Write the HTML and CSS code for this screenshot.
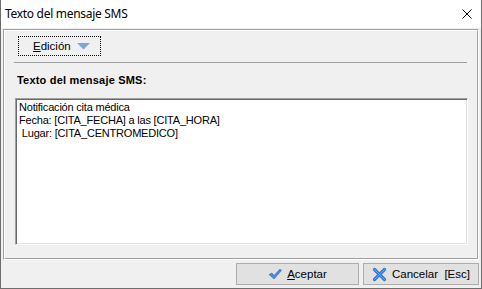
FILE: index.html
```html
<!DOCTYPE html>
<html lang="es">
<head>
<meta charset="utf-8">
<title>Texto del mensaje SMS</title>
<link rel="stylesheet" href="styles.css">
</head>
<body>
<div class="window">
  <div class="titlebar">
    <span class="title">Texto del mensaje SMS</span>
    <svg class="close" width="10" height="10" viewBox="0 0 10 10"><path d="M0.5 0.5 L9.5 9.5 M9.5 0.5 L0.5 9.5" stroke="#000" stroke-width="1" fill="none"/></svg>
  </div>
  <div class="body">
    <div class="panel">
      <div class="panel-inner">
        <div class="menu-btn"><span><u>E</u>dición</span><svg class="tri" width="13" height="7" viewBox="0 0 13 7"><path d="M0 0 H13 L6.5 6.5 Z" fill="#7ea4dc"/></svg></div>
        <div class="sep"></div>
        <div class="label">Texto del mensaje SMS:</div>
        <div class="memo">Notificación cita médica
Fecha: [CITA_FECHA] a las [CITA_HORA]
 Lugar: [CITA_CENTROMEDICO]</div>
      </div>
    </div>
    <div class="buttons">
      <div class="btn btn-ok">
        <svg width="14" height="12" viewBox="0 0 14 12"><path d="M1 6.5 L4 5 L6 7.5 L12 1 L13.5 2.5 L6 11 Z" fill="#4a8ad8" stroke="#2f6fc0" stroke-width="0.6" stroke-linejoin="round"/></svg>
        <span><u>A</u>ceptar</span>
      </div>
      <div class="btn btn-cancel">
        <svg width="15" height="15" viewBox="0 0 15 15"><path d="M2.5 2.5 L12.5 12.5 M12.5 2.5 L2.5 12.5" stroke="#2f7bd4" stroke-width="3.2" stroke-linecap="round"/><path d="M2.5 2.5 L12.5 12.5 M12.5 2.5 L2.5 12.5" stroke="#6aa6ea" stroke-width="1" stroke-linecap="round"/></svg>
        <span>Cancelar &nbsp;[Esc]</span>
      </div>
    </div>
  </div>
</div>
</body>
</html>
```
FILE: styles.css
```css
html, body {
  margin: 0;
  padding: 0;
}
body {
  width: 482px;
  height: 289px;
  overflow: hidden;
  font-family: "Liberation Sans", Arial, sans-serif;
  font-size: 11px;
  color: #000;
}
.window {
  width: 482px;
  height: 289px;
  box-sizing: border-box;
  border-left: 1px solid #6e6e6e;
  border-right: 1px solid #6e6e6e;
  border-bottom: 1px solid #6e6e6e;
  background: #f0f0f0;
  display: flex;
  flex-direction: column;
}
.titlebar {
  height: 28px;
  flex: none;
  background: #fff;
  display: flex;
  align-items: center;
  justify-content: space-between;
  padding: 0 9px 0 4px;
}
.title {
  font-family: "Noto Sans", "Open Sans", sans-serif;
  font-size: 12px;
  line-height: 16px;
  letter-spacing: -0.3px;
}
.close {
  display: block;
}
.body {
  flex: 1;
  display: flex;
  flex-direction: column;
  padding: 1px 2px 3px 2px;
}
.panel {
  height: 231px;
  box-sizing: border-box;
  border-top: 1px solid #a0a0a0;
  border-left: 1px solid #a0a0a0;
  border-right: 1px solid #fff;
  border-bottom: 1px solid #fff;
}
.panel-inner {
  height: 100%;
  box-sizing: border-box;
  border-top: 1px solid #fff;
  border-left: 1px solid #fff;
  border-right: 1px solid #a0a0a0;
  border-bottom: 1px solid #a0a0a0;
  display: flex;
  flex-direction: column;
  align-items: flex-start;
}
.menu-btn {
  margin: 5px 0 0 13px;
  width: 83px;
  height: 20px;
  box-sizing: border-box;
  border: 1px dotted #000;
  display: flex;
  align-items: center;
  padding-left: 14px;
  gap: 6px;
  font-size: 11.5px;
}
.tri {
  display: block;
  margin-top: 1px;
}
.sep {
  margin: 6px 0 0 9px;
  width: 453px;
  height: 1px;
  background: #a0a0a0;
}
.label {
  margin: 11px 0 0 12px;
  font-weight: bold;
  line-height: 13px;
  letter-spacing: 0.2px;
}
.memo {
  margin: 11px 0 0 10px;
  width: 453px;
  height: 147px;
  box-sizing: border-box;
  background: #fff;
  border-top: 1px solid #a0a0a0;
  border-left: 1px solid #a0a0a0;
  border-right: 1px solid #fff;
  border-bottom: 1px solid #fff;
  box-shadow: inset 1px 1px 0 #696969, inset -1px -1px 0 #e3e3e3;
  padding: 2px 2px 0 3px;
  white-space: pre;
  line-height: 13px;
  letter-spacing: -0.2px;
}
.buttons {
  margin-top: 3px;
  display: flex;
  justify-content: flex-end;
  gap: 4px;
}
.btn {
  height: 22px;
  box-sizing: border-box;
  background: #e1e1e1;
  border: 1px solid #adadad;
  display: flex;
  align-items: center;
  justify-content: center;
  gap: 5px;
  font-size: 11.5px;
}
.btn svg {
  display: block;
}
.btn-ok {
  width: 123px;
}
.btn-cancel {
  width: 116px;
}
```
